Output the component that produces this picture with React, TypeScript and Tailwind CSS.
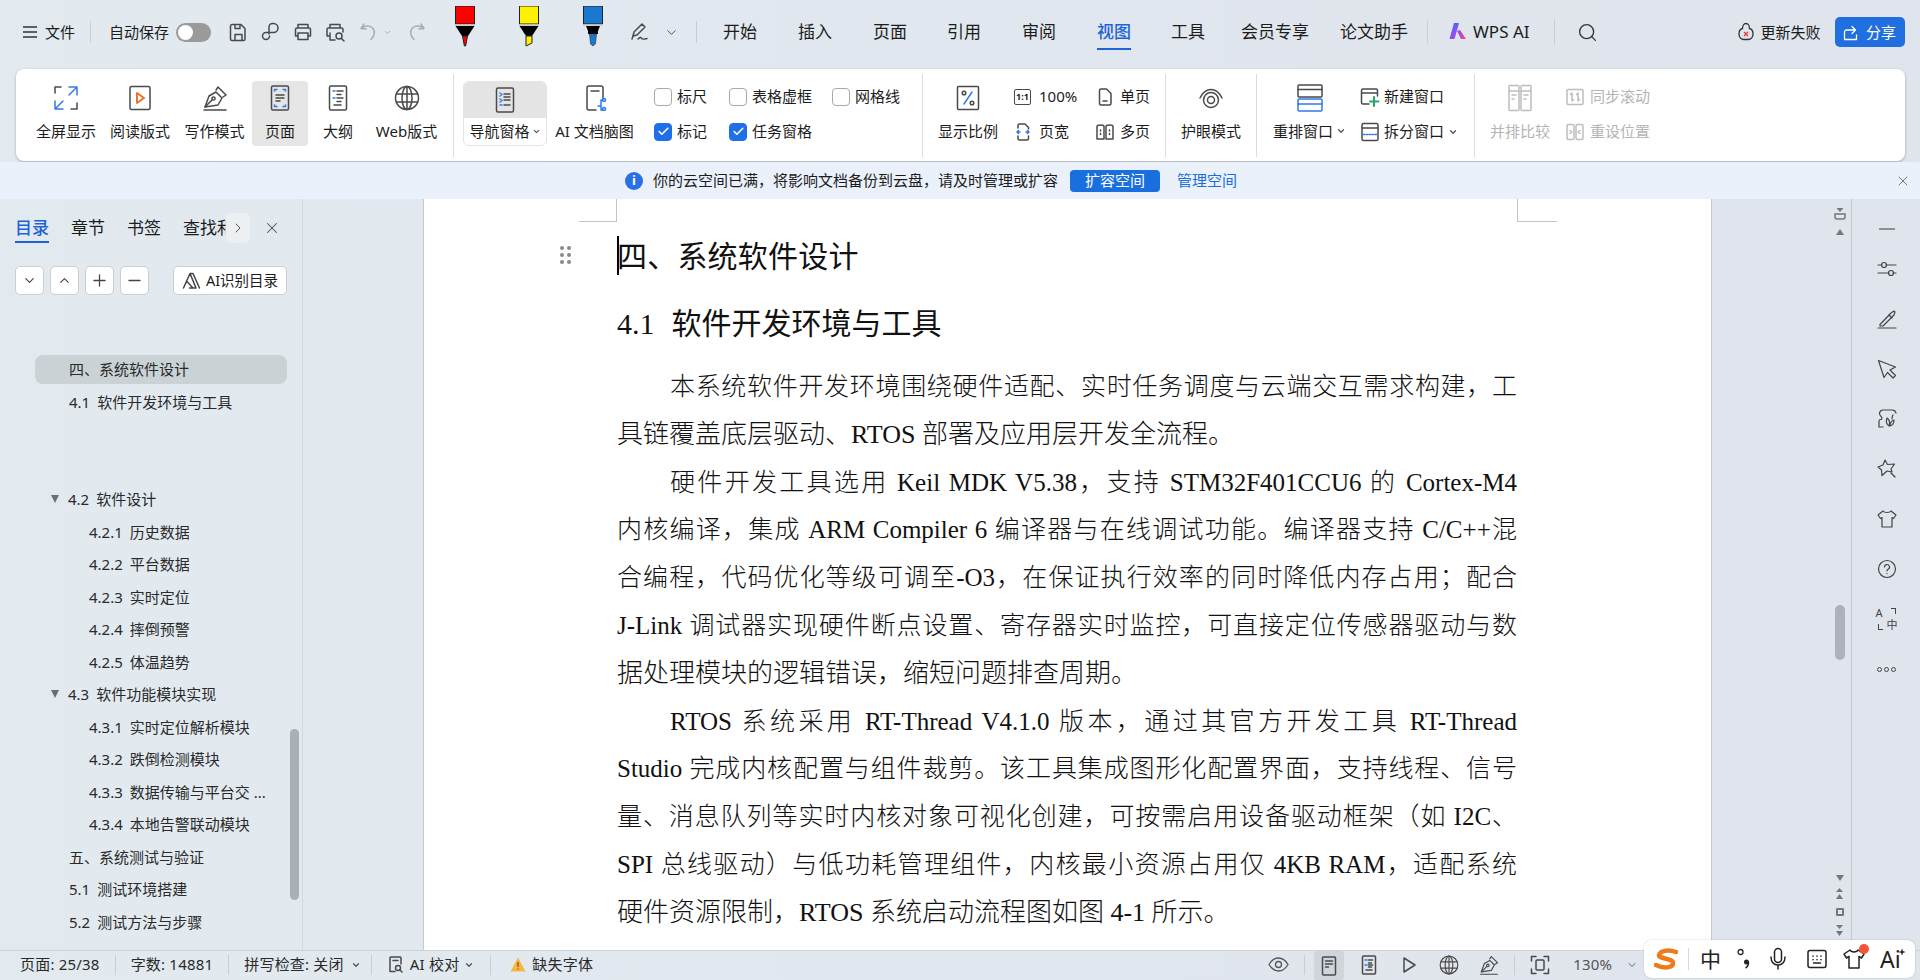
import type { ReactNode } from "react";
import { Check, ChevronDown, ChevronRight, ChevronUp, Minus, Plus, Search, Sparkle, X } from "lucide-react";

const BLUE = "#2f7bea";
const DARK = "#4a4a4a";

// small wrapper so every hand drawn icon shares stroke settings
const Svg = ({ size = 20, box = 24, color = DARK, width = 1.5, children, className = "" }: { size?: number; box?: number; color?: string; width?: number; children: ReactNode; className?: string }) => (
  <svg width={size} height={size} viewBox={`0 0 ${box} ${box}`} fill="none" stroke={color} strokeWidth={width} strokeLinecap="round" strokeLinejoin="round" className={`shrink-0 ${className}`}>
    {children}
  </svg>
);

const Marker = ({ body, kind }: { body: string; kind: "fine" | "chisel" | "round" }) => (
  <svg width="20" height="41" viewBox="0 0 20 41" className="shrink-0">
    <rect x="0.5" y="0" width="19" height="18" fill={body} stroke="#222" strokeWidth="1" />
    <rect x="0" y="18" width="20" height="1.5" fill="#b9b9b9" />
    {kind === "round" ? <path d="M3 20h14l-2 5v3H5v-3z" fill="#000" /> : <path d="M0.5 20h19L13 30H7z" fill="#000" />}
    {kind === "fine" && <path d="M7.5 30h5L10.6 40H9.4z" fill={body} stroke="#222" strokeWidth="1" />}
    {kind === "chisel" && <path d="M7 30h6v7l-6 3z" fill={body} stroke="#222" strokeWidth="1" />}
    {kind === "round" && <path d="M6.5 28h7l-1 10-2.5 2-2.5-2z" fill={body} stroke="#333" strokeWidth="0.6" />}
  </svg>
);

const PenNib = ({ size = 26 }: { size?: number }) => (
  <Svg size={size} box={26}>
    <path d="M3 22l4-11 7-4 6 6-4 7z" />
    <path d="M3 22l7-7" />
    <circle cx="11.5" cy="13.5" r="1.6" />
    <path d="M14 5l2-3 8 8-3 2" />
    <path d="M2 25h22" />
  </Svg>
);

const Globe = ({ size = 26 }: { size?: number }) => (
  <Svg size={size} box={26}>
    <circle cx="13" cy="13" r="11.5" />
    <ellipse cx="13" cy="13" rx="5" ry="11.5" />
    <path d="M2.5 9h21M2.5 17h21M13 1.5v23" />
  </Svg>
);

const DocOutline = ({ size = 26 }: { size?: number }) => (
  <Svg size={size} box={26}>
    <rect x="4.5" y="1" width="17" height="24" rx="1.5" />
    <path d="M8 6h2M8 13h2" stroke={BLUE} />
    <path d="M12 6h6M12 9.5h4M12 13h6M12 16.5h4M9 20h7" />
  </Svg>
);

const DocPage = ({ size = 26 }: { size?: number }) => (
  <Svg size={size} box={26}>
    <rect x="4.5" y="1" width="17" height="24" rx="1.5" />
    <path d="M7.5 6V4.5H10M16 4.5h2.5V6M7.5 20v1.500H10M16 21.500h2.500V20" stroke={BLUE} />
    <path d="M9 10h8M9 13h8M9 16h4" />
  </Svg>
);

// one big button of the ribbon: icon over label
const Big = ({ icon, label, className, muted, caret }: { icon: ReactNode; label: string; className: string; muted?: boolean; caret?: boolean }) => (
  <div className={`flex h-[65px] shrink-0 flex-col items-center ${className}`}>
    <div className="flex h-[34px] items-center justify-center">{icon}</div>
    <div className={`mt-[6px] flex items-center whitespace-nowrap text-[15px] leading-[20px] ${muted ? "text-[#b4b4b4]" : "text-[#1c1c1c]"}`}>
      {label}
      {caret && <ChevronDown size={10} strokeWidth={3} className="ml-[3px] text-[#555]" />}
    </div>
  </div>
);

const Divider = ({ className }: { className: string }) => <div className={`-mt-[7px] h-[83px] w-px shrink-0 bg-[#dcdcdc] ${className}`} />;

const Small = ({ icon, label, caret, muted }: { icon: ReactNode; label: string; caret?: boolean; muted?: boolean }) => (
  <div className={`flex h-[35px] items-center whitespace-nowrap text-[15px] ${muted ? "text-[#b4b4b4]" : "text-[#1c1c1c]"}`}>
    {icon}
    <span>{label}</span>
    {caret && <ChevronDown size={10} strokeWidth={3} className="ml-[4px] text-[#555]" />}
  </div>
);

const Box = ({ on, label }: { on?: boolean; label: string }) => (
  <div className="flex h-[35px] items-center whitespace-nowrap text-[15px] text-[#1c1c1c]">
    <span className={`mr-[5px] flex h-[18px] w-[18px] items-center justify-center rounded-[4px] border ${on ? "border-[#1f6fe8] bg-[#1f6fe8]" : "border-[#a9a9a9] bg-white"}`}>
      {on && <Check size={13} strokeWidth={3} className="text-white" />}
    </span>
    {label}
  </div>
);

const TopBar = () => (
  <div className="flex h-[69px] shrink-0 items-center pb-[5px] pl-[23px] text-[#1c1c1c]">
    <Svg size={14} box={14} color="#333"><path d="M0 2h14M0 7h14M0 12h14" /></Svg>
    <span className="ml-[8px] text-[15px]">文件</span>
    <div className="ml-[15px] h-[22px] w-px bg-[#c9ced3]" />
    <span className="ml-[18px] text-[15px]">自动保存</span>
    <div className="ml-[7px] flex h-[19px] w-[35px] items-center rounded-full bg-[#9a9a9a] pl-[2px]">
      <div className="h-[15px] w-[15px] rounded-full bg-white" />
    </div>
    <div className="ml-[18px]">
      <Svg size={19} box={19}><path d="M3 1.500h9l4 4v10.500a1.500 1.500 0 0 1-1.500 1.500h-11.500a1.500 1.500 0 0 1-1.500-1.500v-13a1.500 1.500 0 0 1 1.500-1.500z" /><path d="M6 17.500v-6h7v6M6 2v3.500h5V2" /></Svg>
    </div>
    <div className="ml-[13px]">
      <Svg size={20} box={20}><path d="M8 12V5a3.500 3.500 0 0 1 3.500-3.500h1a4 4 0 0 1 0 9H5a3.500 3.500 0 1 0 3.500 3.500" /></Svg>
    </div>
    <div className="ml-[12px]">
      <Svg size={20} box={20}><path d="M5 6V2.500h10V6M5 14H2.500V7.500a1.500 1.500 0 0 1 1.500-1.500h12a1.500 1.500 0 0 1 1.500 1.500V14H15" /><rect x="5" y="11" width="10" height="6.500" /></Svg>
    </div>
    <div className="ml-[12px]">
      <Svg size={21} box={21}><path d="M5 6V2.500h10V6M4 14H2V7.500A1.500 1.500 0 0 1 3.500 6h13A1.500 1.500 0 0 1 18 7.500V10M5 11v7h5" /><circle cx="14" cy="14" r="3" /><path d="M16.500 16.500l2.500 2.500" /></Svg>
    </div>
    <div className="ml-[13px]">
      <Svg size={20} box={20} color="#a9aeb3"><path d="M5 2L2 6.500 7 7" /><path d="M2.500 6.500c3-3 7.500-3.500 10.500-1 3.500 3 3 8-1 12" /></Svg>
    </div>
    <ChevronDown size={9} strokeWidth={2.5} className="ml-[4px] text-[#a9aeb3]" />
    <div className="ml-[14px]">
      <Svg size={20} box={20} color="#a9aeb3"><path d="M15 2l3 4.500L13 7" /><path d="M17.500 6.500c-3-3-7.500-3.500-10.500-1-3.500 3-3 8 1 12" /></Svg>
    </div>
    <div className="ml-[29px] -mt-[12px] flex gap-[44px]">
      <Marker body="#fe0000" kind="fine" />
      <Marker body="#fff200" kind="chisel" />
      <Marker body="#1a78cf" kind="round" />
    </div>
    <div className="ml-[27px]">
      <Svg size={20} box={20}><path d="M3 14l1-4 8-8 3 3-8 8z" /><path d="M3 14l-1 3M8 17c2-2 3-2 3.500-.8s2 1.300 5.500.3" /></Svg>
    </div>
    <ChevronDown size={15} strokeWidth={1.6} className="ml-[14px] text-[#555]" />
    <div className="ml-[17px] h-[22px] w-px bg-[#c9ced3]" />
    <div className="ml-[26px] flex items-center text-[17px]">
      <span>开始</span>
      <span className="ml-[41px]">插入</span>
      <span className="ml-[41px]">页面</span>
      <span className="ml-[40px]">引用</span>
      <span className="ml-[41px]">审阅</span>
      <span className="relative ml-[41px] font-medium text-[#1d63d8]">
        视图
        <span className="absolute -bottom-[5px] left-0 h-[2px] w-full bg-[#1d63d8]" />
      </span>
      <span className="ml-[40px]">工具</span>
      <span className="ml-[36px]">会员专享</span>
      <span className="ml-[31px]">论文助手</span>
    </div>
    <div className="ml-[19px] h-[22px] w-px bg-[#c9ced3]" />
    <svg width="20" height="20" viewBox="0 0 20 20" className="ml-[20px] shrink-0">
      <defs>
        <linearGradient id="wpsAi" x1="0" y1="0" x2="1" y2="1">
          <stop offset="0" stopColor="#3a6cf5" />
          <stop offset="0.55" stopColor="#9a4bf0" />
          <stop offset="1" stopColor="#f5487f" />
        </linearGradient>
      </defs>
      <path d="M6 1h5L6.500 17H1.500zM9 9l3-1 6 9h-5z" fill="url(#wpsAi)" />
    </svg>
    <span className="ml-[5px] text-[17px]">WPS AI</span>
    <div className="ml-[24px] h-[26px] w-px bg-[#c9ced3]" />
    <Search size={21} strokeWidth={1.5} className="ml-[22px] text-[#333]" />
    <svg width="16" height="20" viewBox="0 0 16 20" fill="none" stroke="#333" strokeWidth="1.300" className="ml-[140px] shrink-0">
      <path d="M8 1.500c2.500 0 3.500 3 3.500 5 2 .5 3.500 2.500 3.500 5.500a5 5 0 0 1-5 5.500H6a5 5 0 0 1-5-5.500c0-3 1.500-5 3.500-5.500 0-2 1-5 3.500-5z" />
      <path d="M6 10l4 4M10 10l-4 4" stroke="#e03a3a" />
    </svg>
    <span className="ml-[7px] text-[15px]">更新失败</span>
    <div className="ml-[14px] flex h-[30px] w-[70px] items-center justify-center gap-[6px] rounded-[5px] bg-[#1f6fe0] text-[15px] text-white">
      <Svg size={17} box={17} color="#fff" width={1.300}><path d="M1.500 15V8a2 2 0 0 1 2-2H12M9 2.500L12.500 6 9 9.500M1.500 15.500h12V11" /></Svg>
      分享
    </div>
  </div>
);

const Ribbon = () => (
  <div className="mx-[16px] flex h-[92px] w-[1889px] shrink-0 items-start rounded-[8px] bg-white pl-[13px] pt-[12px] shadow-[0_1px_3px_rgba(0,0,0,0.28)]">
    <Big className="w-[74px]" label="全屏显示" icon={
      <Svg size={26} box={26}>
        <path d="M2 8V2h6M24 18v6h-6" />
        <path d="M16 2h8v8M24 2l-8 8M2 16v8h8M2 24l8-8" stroke={BLUE} />
      </Svg>
    } />
    <Big className="w-[74px]" label="阅读版式" icon={
      <Svg size={26} box={26}>
        <rect x="3" y="1.500" width="20" height="23" rx="1.500" />
        <path d="M10 8l7 5-7 5z" stroke="#e8732a" strokeWidth={2} />
      </Svg>
    } />
    <Big className="w-[75px]" label="写作模式" icon={<PenNib />} />
    <Big className="w-[56px] rounded-[4px] bg-[#e6e6e6]" label="页面" icon={<DocPage />} />
    <Big className="w-[60px]" label="大纲" icon={<DocOutline />} />
    <Big className="w-[77px]" label="Web版式" icon={<Globe />} />
    <Divider className="ml-[8px]" />
    <div className="ml-[9px] flex h-[65px] w-[84px] shrink-0 flex-col items-center overflow-hidden rounded-[6px] border border-[#e4e4e4]">
      <div className="flex h-[37px] w-full items-center justify-center bg-[#e4e4e4]">
        <Svg size={26} box={26}>
          <rect x="4.500" y="1" width="17" height="24" rx="1.500" />
          <path d="M8 6l2 1.500L8 9M8 12l2 1.500L8 15M8 18h2" stroke={BLUE} />
          <path d="M12 7h6M12 13h6M12 18h6M12 10h6" />
        </Svg>
      </div>
      <div className="flex h-[27px] items-center whitespace-nowrap text-[15px] text-[#1c1c1c]">
        导航窗格
        <ChevronDown size={9} strokeWidth={3} className="ml-[2px] text-[#555]" />
      </div>
    </div>
    <Big className="w-[95px]" label="AI 文档脑图" icon={
      <Svg size={26} box={26}>
        <path d="M14 25H7a2 2 0 0 1-2-2V3a2 2 0 0 1 2-2h12a2 2 0 0 1 2 2v10" />
        <path d="M9 6h8" />
        <path d="M16 21h3M19 15v10M19 15h2M19 25h2" stroke={BLUE} />
        <circle cx="22" cy="15" r="1.500" stroke={BLUE} />
        <circle cx="22" cy="24" r="1.500" stroke={BLUE} />
      </Svg>
    } />
    <div className="ml-[12px] -mt-[2px] flex w-[75px] shrink-0 flex-col">
      <Box label="标尺" />
      <Box on label="标记" />
    </div>
    <div className="ml-0 -mt-[2px] flex w-[103px] shrink-0 flex-col">
      <Box label="表格虚框" />
      <Box on label="任务窗格" />
    </div>
    <div className="-mt-[2px] flex w-[90px] shrink-0 flex-col">
      <Box label="网格线" />
    </div>
    <Divider className="" />
    <Big className="ml-[15px] w-[60px]" label="显示比例" icon={
      <Svg size={26} box={26}>
        <rect x="2.500" y="1.500" width="21" height="23" rx="1" />
        <path d="M17 7L9 19" stroke={BLUE} />
        <circle cx="9" cy="8" r="1.800" />
        <circle cx="17" cy="18" r="1.800" />
      </Svg>
    } />
    <div className="ml-[16px] -mt-[2px] flex w-[82px] shrink-0 flex-col">
      <Small label="100%" icon={
        <span className="mr-[8px] flex h-[16px] w-[17px] items-center justify-center rounded-[2px] border border-[#4a4a4a] text-[9px] font-bold leading-none">1:1</span>
      } />
      <Small label="页宽" icon={
        <Svg size={18} box={18} className="mr-[7px]">
          <path d="M4 5V2.500A1.500 1.500 0 0 1 5.500 1H11l3.500 3.500V6M4 13v2.500A1.500 1.500 0 0 0 5.500 17h7.500a1.500 1.500 0 0 0 1.500-1.500V13" />
          <path d="M3 9h3M3 9l1.500-1.500M3 9l1.500 1.500M15 9h-3M15 9l-1.500-1.500M15 9l-1.500 1.500" stroke={BLUE} />
        </Svg>
      } />
    </div>
    <div className="-mt-[2px] flex w-[69px] shrink-0 flex-col">
      <Small label="单页" icon={
        <Svg size={18} box={18} className="mr-[6px]">
          <path d="M3.500 2.500A1.500 1.500 0 0 1 5 1h5.500L15 5.500v10a1.500 1.500 0 0 1-1.500 1.500H5a1.500 1.500 0 0 1-1.500-1.500z" />
          <path d="M7 13h4" />
        </Svg>
      } />
      <Small label="多页" icon={
        <Svg size={18} box={18} className="mr-[6px]">
          <path d="M1 3.500C1 1.500 8 1.500 8 3.500v12.500H1zM10 3.500c0-2 7-2 7 0v12.500h-7z" />
          <path d="M4.500 7v1M4.500 10.500v1M13.500 7v1M13.500 10.500v1" />
        </Svg>
      } />
    </div>
    <Divider className="" />
    <Big className="ml-[15px] w-[60px]" label="护眼模式" icon={
      <Svg size={28} box={28}>
        <circle cx="14" cy="16" r="3.500" />
        <circle cx="14" cy="16" r="7.500" />
        <path d="M3 14C6 8 10 5.500 14 5.500S22 8 25 14" />
      </Svg>
    } />
    <Divider className="ml-[15px]" />
    <Big className="ml-[15px] w-[75px]" caret label="重排窗口" icon={
      <Svg size={28} box={28}>
        <rect x="2" y="1" width="24" height="12" rx="1" />
        <path d="M2 5.500h24" />
        <rect x="2" y="15" width="24" height="12" rx="1" stroke={BLUE} />
        <path d="M2 20h24" stroke={BLUE} />
      </Svg>
    } />
    <div className="ml-[13px] -mt-[2px] flex w-[114px] shrink-0 flex-col">
      <Small label="新建窗口" icon={
        <Svg size={20} box={20} className="mr-[4px]">
          <path d="M9 17H3a1.500 1.500 0 0 1-1.500-1.500v-12A1.500 1.500 0 0 1 3 2h13a1.500 1.500 0 0 1 1.500 1.500V9M1.500 6h16" />
          <path d="M14 10v9M10 14.500h8.500" stroke="#27a468" strokeWidth={2} />
        </Svg>
      } />
      <Small label="拆分窗口" caret icon={
        <Svg size={20} box={20} className="mr-[4px]">
          <rect x="2" y="1.500" width="16" height="17" rx="1.500" />
          <path d="M2 6h16" />
          <path d="M3 12.500h14" stroke={BLUE} strokeDasharray="1.500 1.500" />
        </Svg>
      } />
    </div>
    <Divider className="" />
    <Big className="ml-[15px] w-[60px]" muted label="并排比较" icon={
      <Svg size={28} box={28} color="#bdbdbd">
        <rect x="3" y="1.500" width="10" height="25" rx="1" />
        <rect x="15" y="1.500" width="10" height="25" rx="1" />
        <path d="M3 7h10M15 7h10M6 11h4M18 11h4M6 15h2M18 15h2" />
      </Svg>
    } />
    <div className="ml-[16px] -mt-[2px] flex w-[110px] shrink-0 flex-col">
      <Small muted label="同步滚动" icon={
        <Svg size={18} box={18} color="#bdbdbd" className="mr-[6px]">
          <rect x="1" y="1.500" width="16" height="15" rx="1" />
          <path d="M6 5v8M6 5L4.500 6.500M6 13l1.500-1.500M12 5v8M12 5l-1.500 1.500M12 13l1.500-1.500" />
        </Svg>
      } />
      <Small muted label="重设位置" icon={
        <Svg size={18} box={18} color="#bdbdbd" className="mr-[6px]">
          <rect x="1" y="1.500" width="7" height="15" rx="1.500" />
          <rect x="10" y="1.500" width="7" height="15" rx="1.500" />
          <path d="M6 9L4 7.500M6 9L4 10.500M12 9l2-1.500M12 9l2 1.500" />
        </Svg>
      } />
    </div>
  </div>
);

const InfoBar = () => (
  <div className="mt-px flex h-[37px] shrink-0 items-center bg-[#ebf1fb] pl-[625px] text-[15px] text-[#1c1c1c]">
    <span className="flex h-[18px] w-[18px] items-center justify-center rounded-full bg-[#2a6fe8] text-[13px] font-bold leading-none text-white">i</span>
    <span className="ml-[10px] whitespace-nowrap">你的云空间已满，将影响文档备份到云盘，请及时管理或扩容</span>
    <span className="ml-[12px] flex h-[22px] w-[90px] items-center justify-center rounded-[4px] bg-[#1a6fdf] text-white">扩容空间</span>
    <span className="ml-[17px] whitespace-nowrap text-[#1a6fdf]">管理空间</span>
    <X size={16} strokeWidth={1.3} className="ml-auto mr-[9px] text-[#666]" />
  </div>
);

const ToolBtn = ({ children, className = "w-[29px]" }: { children: ReactNode; className?: string }) => (
  <div className={`flex h-[29px] items-center justify-center rounded-[5px] border border-[#c9ced3] bg-white text-[#444] ${className}`}>{children}</div>
);

type TocRow = { num?: string; text?: string; level?: 1 | 2 | 3; open?: boolean; active?: boolean; more?: boolean };

const toc: TocRow[] = [
  { text: "四、系统软件设计", level: 1, active: true },
  { num: "4.1", text: "软件开发环境与工具", level: 1 },
  {},
  {},
  { num: "4.2", text: "软件设计", level: 1, open: true },
  { num: "4.2.1", text: "历史数据", level: 2 },
  { num: "4.2.2", text: "平台数据", level: 2 },
  { num: "4.2.3", text: "实时定位", level: 2 },
  { num: "4.2.4", text: "摔倒预警", level: 2 },
  { num: "4.2.5", text: "体温趋势", level: 2 },
  { num: "4.3", text: "软件功能模块实现", level: 1, open: true },
  { num: "4.3.1", text: "实时定位解析模块", level: 2 },
  { num: "4.3.2", text: "跌倒检测模块", level: 2 },
  { num: "4.3.3", text: "数据传输与平台交 ...", level: 2 },
  { num: "4.3.4", text: "本地告警联动模块", level: 2 },
  { text: "五、系统测试与验证", level: 1 },
  { num: "5.1", text: "测试环境搭建", level: 1 },
  { num: "5.2", text: "测试方法与步骤", level: 1 },
];

const Toc = () => (
  <div className="relative mt-[58px] w-[302px]">
    {toc.map((row, i) => (
      <div key={i} className="flex h-[32.5px] items-center pl-[35px] text-[15px] text-[#2a2a2a]">
        {row.text && (
          <div className={`flex h-[29px] w-[252px] items-center whitespace-nowrap rounded-[8px] ${row.active ? "bg-[#cbd2d6]" : ""} ${row.level === 2 ? "pl-[54px]" : "pl-[34px]"}`}>
            {row.open && <span className="-ml-[18px] mr-[9px] h-0 w-0 border-x-[4.5px] border-t-[8px] border-x-transparent border-t-[#6e6e6e]" />}
            {row.num && <span className="mr-[7px]">{row.num}</span>}
            {row.text}
          </div>
        )}
      </div>
    ))}
  </div>
);

const LeftPanel = () => (
  <div className="relative flex w-[303px] shrink-0 flex-col border-r border-[#d3dadf]">
    <div className="flex h-[45px] items-center pl-[15px] pt-[13px] text-[17px] text-[#1c1c1c]">
      <span className="relative font-medium text-[#1d63d8]">
        目录
        <span className="absolute -bottom-[2px] left-0 h-[2px] w-full bg-[#1d63d8]" />
      </span>
      <span className="ml-[22px]">章节</span>
      <span className="ml-[22px]">书签</span>
      <span className="ml-[22px] w-[43px] whitespace-nowrap">查找和</span>
      <span className="relative flex h-[30px] w-[24px] items-center justify-center rounded-[5px] bg-[#edf0f3]">
        <ChevronRight size={16} strokeWidth={1.5} className="text-[#555]" />
      </span>
      <X size={18} strokeWidth={1.4} className="ml-[13px] text-[#555]" />
    </div>
    <div className="mt-[22px] flex items-center pl-[15px]">
      <div className="flex gap-[6px]">
        <ToolBtn><ChevronDown size={15} strokeWidth={1.8} /></ToolBtn>
        <ToolBtn><ChevronUp size={15} strokeWidth={1.8} /></ToolBtn>
        <ToolBtn><Plus size={19} strokeWidth={1.6} /></ToolBtn>
        <ToolBtn><Minus size={19} strokeWidth={1.6} /></ToolBtn>
      </div>
      <ToolBtn className="ml-[24px] w-[114px] gap-[5px] text-[14.500px]">
        <Svg size={19} box={19} color="#444"><path d="M1.500 17L8 2.500h3L17.500 17M4.500 10L11 17M8 2.500L14 17H7.500" /></Svg>
        <span className="whitespace-nowrap text-[#1c1c1c]">AI识别目录</span>
      </ToolBtn>
    </div>
    <Toc />
    <div className="absolute left-[290px] top-[530px] h-[171px] w-[9px] rounded-full bg-[#a9b1b4]" />
  </div>
);

// one typeset line of the page, stretched to the text block unless it ends a paragraph
const Line = ({ children, first, end }: { children: ReactNode; first?: boolean; end?: boolean }) => (
  <div className={`h-[47.800px] leading-[47.800px] ${first ? "pl-[53px]" : ""} ${end ? "text-[26px]" : "text-[25px] [text-align:justify] [text-align-last:justify]"}`}>
    {children}
  </div>
);

const Page = () => (
  <div className="relative w-[1289px] shrink-0 border-x border-[#c5cacf] bg-white pl-[193px] pr-[194px] [font-family:'Liberation_Serif','Noto_Sans_CJK_SC',serif] text-[#111]">
    <div className="-ml-[38px] -mr-[40px] flex h-[23px] justify-between">
      <div className="h-full w-[38px] border-b border-r border-[#c4c4c4]" />
      <div className="h-full w-[40px] border-b border-l border-[#c4c4c4]" />
    </div>
    <div className="flex h-[68px] items-center text-[30px] tracking-[0.2px]">四、系统软件设计</div>
    <div className="flex h-[66px] items-center text-[30px]">
      <span className="mr-[17px]">4.1</span>软件开发环境与工具
    </div>
    <div className="mt-[7px] font-light">
      <Line first>本系统软件开发环境围绕硬件适配、实时任务调度与云端交互需求构建，工</Line>
      <Line end>具链覆盖底层驱动、RTOS 部署及应用层开发全流程。</Line>
      <Line first>硬件开发工具选用 Keil MDK V5.38，支持 STM32F401CCU6 的 Cortex-M4</Line>
      <Line>内核编译，集成 ARM Compiler 6 编译器与在线调试功能。编译器支持 C/C++混</Line>
      <Line>合编程，代码优化等级可调至-O3，在保证执行效率的同时降低内存占用；配合</Line>
      <Line>J-Link 调试器实现硬件断点设置、寄存器实时监控，可直接定位传感器驱动与数</Line>
      <Line end>据处理模块的逻辑错误，缩短问题排查周期。</Line>
      <Line first>RTOS 系统采用 RT-Thread V4.1.0 版本，通过其官方开发工具 RT-Thread</Line>
      <Line>Studio 完成内核配置与组件裁剪。该工具集成图形化配置界面，支持线程、信号</Line>
      <Line>量、消息队列等实时内核对象可视化创建，可按需启用设备驱动框架（如 I2C、</Line>
      <Line>SPI 总线驱动）与低功耗管理组件，内核最小资源占用仅 4KB RAM，适配系统</Line>
      <Line end>硬件资源限制，RTOS 系统启动流程图如图 4-1 所示。</Line>
    </div>
    <div className="absolute left-[193px] top-[37px] h-[39px] w-[2px] bg-black" />
    <div className="absolute left-[136px] top-[47px] grid grid-cols-2 gap-x-[3px] gap-y-[3px]">
      {[0, 1, 2, 3, 4, 5].map((d) => (
        <span key={d} className="h-[4px] w-[4px] rounded-full bg-[#8a8a8a]" />
      ))}
    </div>
  </div>
);

const RightGutter = () => (
  <div className="flex w-[139px] shrink-0 flex-col items-end pr-[5px] text-[#777]">
    <svg width="12" height="12" viewBox="0 0 12 12" className="mt-[9px] shrink-0" fill="#777">
      <path d="M2.500 0h7L6 4z" />
      <path d="M1 6h10v3a2 2 0 0 1-2 2H3a2 2 0 0 1-2-2z" fill="none" stroke="#777" strokeWidth="1.500" />
    </svg>
    <span className="mr-[2px] mt-[9px] h-0 w-0 border-x-[4px] border-b-[6px] border-x-transparent border-b-[#777]" />
    <div className="mr-px mt-[370px] h-[55px] w-[10px] rounded-full bg-[#adb1bb]" />
    <span className="mr-[2px] mt-[215px] h-0 w-0 border-x-[4px] border-t-[6px] border-x-transparent border-t-[#777]" />
    <svg width="9" height="12" viewBox="0 0 9 12" className="mr-[2px] mt-[7px]" fill="#777"><path d="M4.500 0L8 4H1zM4.500 6L8 11H1z" /></svg>
    <span className="mr-[2px] mt-[8px] h-[8px] w-[8px] rounded-[1px] border-2 border-[#777]" />
    <svg width="9" height="12" viewBox="0 0 9 12" className="mr-[2px] mt-[8px]" fill="#777"><path d="M1 1h7L4.500 5zM1 7h7L4.500 12z" /></svg>
  </div>
);

const SideIcon = ({ children }: { children: ReactNode }) => <div className="flex h-[50px] items-center justify-center">{children}</div>;

const RightSide = () => (
  <div className="flex w-[70px] shrink-0 flex-col items-center border-l border-[#c5cacf] pt-[15px]">
    <div className="flex h-[30px] items-center">
      <span className="h-[2px] w-[16px] bg-[#8f8f8f]" />
    </div>
    <SideIcon>
      <Svg size={20} box={20} width={1.200} color="#444"><path d="M1 6h4M9 6h10M1 14h11M16 14h3" /><circle cx="7" cy="6" r="2.500" /><circle cx="14" cy="14" r="2.500" /></Svg>
    </SideIcon>
    <SideIcon>
      <Svg size={20} box={20} width={1.200} color="#444"><path d="M1 19h18" /><path d="M3 15.500L14 4l3-2 1 1-1 3-11 11H3z" /><path d="M12 6l3 3" /></Svg>
    </SideIcon>
    <SideIcon>
      <Svg size={20} box={20} width={1.200} color="#444"><path d="M1.500 1.500L18.500 8l-5.500 3 5.500 5.500-2.500 2.500-5.500-5.500L7 18.500z" /></Svg>
    </SideIcon>
    <SideIcon>
      <Svg size={20} box={20} width={1.200} color="#444"><path d="M6 18H2v-6c0-1 1-1.500 2-1.500S5 9 4.500 8 2 6 2.500 4 4 1 6 1h9a4 4 0 0 1 4 3" /><path d="M12 17c-3-2-3-5-2-8 3 2 3 5 2 8zM13 17c0-3 1-5 4-6 0 3-1 5-4 6zM16 6c-1 1-1 2-1 4" /></Svg>
    </SideIcon>
    <SideIcon>
      <Svg size={20} box={20} width={1.200} color="#444"><path d="M8 1l2.500 4.500 7-.5-3.500 5 1 3-5-1-5 4.500-.5-5.500L1 8l5-2z" /><path d="M14 14l4 4" /></Svg>
    </SideIcon>
    <SideIcon>
      <Svg size={20} box={20} width={1.200} color="#444"><path d="M6 2L1 6l2.500 3.500L5 8.500V18h10V8.500l1.500 1L19 6l-5-4c-1 2-7 2-8 0z" /></Svg>
    </SideIcon>
    <SideIcon>
      <Svg size={20} box={20} width={1.200} color="#444"><circle cx="10" cy="10" r="8.500" /><path d="M7.500 8a2.500 2.500 0 1 1 3.500 2.300c-.7.300-1 .8-1 1.700M10 14.500v.2" /></Svg>
    </SideIcon>
    <SideIcon>
      <div className="relative h-[22px] w-[20px] text-[#444]">
        <span className="absolute -left-[1px] -top-[1px] text-[11px] leading-[12px]">A</span>
        <span className="absolute -bottom-[1px] -right-[1px] text-[11px] leading-[12px]">中</span>
        <span className="absolute right-[1px] top-0 h-[6px] w-[5px] border-r border-t border-[#444]" />
        <span className="absolute bottom-0 left-[1px] h-[6px] w-[5px] border-b border-l border-[#444]" />
      </div>
    </SideIcon>
    <SideIcon>
      <div className="flex gap-[2px]">
        <span className="h-[5px] w-[5px] rounded-full border border-[#444]" />
        <span className="h-[5px] w-[5px] rounded-full border border-[#444]" />
        <span className="h-[5px] w-[5px] rounded-full border border-[#444]" />
      </div>
    </SideIcon>
  </div>
);

const VBar = ({ className }: { className: string }) => <div className={`h-[20px] w-px shrink-0 bg-[#c9ced3] ${className}`} />;

const StatusBar = () => (
  <div className="flex h-[30px] shrink-0 items-center border-t border-[#cdd2d6] pb-[2px] pl-[20px] text-[15px] tracking-[0.2px] text-[#2a2a2a]">
    <span className="whitespace-nowrap">页面: 25/38</span>
    <VBar className="ml-[15px]" />
    <span className="ml-[15px] whitespace-nowrap">字数: 14881</span>
    <VBar className="ml-[15px]" />
    <span className="ml-[15px] whitespace-nowrap">拼写检查: 关闭</span>
    <ChevronDown size={10} strokeWidth={3} className="ml-[7px] text-[#555]" />
    <VBar className="ml-[10px]" />
    <Svg size={17} box={17} className="ml-[15px]"><path d="M8 15.500H3V2a1 1 0 0 1 1-1h9a1 1 0 0 1 1 1v6M6 4.500h5" /><circle cx="11" cy="12" r="2.500" /><path d="M13 14l2 2" /></Svg>
    <span className="ml-[6px] whitespace-nowrap">AI 校对</span>
    <ChevronDown size={10} strokeWidth={3} className="ml-[5px] text-[#555]" />
    <VBar className="ml-[16px]" />
    <svg width="16" height="15" viewBox="0 0 16 15" className="ml-[19px] shrink-0"><path d="M8 0.500L15.500 14.500H0.500z" fill="#f5b642" /><path d="M8 5v5M8 11.500v1.200" stroke="#b5561d" strokeWidth="1.500" /></svg>
    <span className="ml-[6px] whitespace-nowrap">缺失字体</span>
    <svg width="21" height="15" viewBox="0 0 21 15" fill="none" stroke="#555" strokeWidth="1.300" className="ml-[675px] shrink-0"><path d="M1 7.500C4 2.500 7 1 10.500 1S17 2.500 20 7.500C17 12.500 14 14 10.500 14S4 12.500 1 7.500z" /><circle cx="10.500" cy="7.500" r="3" /></svg>
    <VBar className="ml-[15px]" />
    <div className="ml-[9px] -mb-[2px] flex h-[29px] w-[30px] items-center justify-center rounded-[3px] bg-[#d0d5dc]">
      <Svg size={20} box={20}><rect x="3.500" y="1" width="13" height="18" rx="1" /><path d="M6.500 5h7M6.500 8h7M6.500 11h3" /></Svg>
    </div>
    <Svg size={20} box={20} className="ml-[15px]"><rect x="3.500" y="1" width="13" height="18" rx="1" /><path d="M6 5h2M6 10h2" stroke={BLUE} /><path d="M9.500 5h4M9.500 8h3M9.500 10h4M9.500 12h3M7 15h6" /></Svg>
    <Svg size={18} box={18} className="ml-[21px]"><path d="M4 2l11 7-11 7z" /></Svg>
    <div className="ml-[21px]"><Globe size={20} /></div>
    <div className="ml-[20px]"><PenNib size={20} /></div>
    <VBar className="ml-[15px]" />
    <Svg size={20} box={20} className="ml-[15px]"><path d="M1.500 6V1.500H6M14 1.500h4.500V6M18.500 14v4.500H14M6 18.500H1.500V14" /><rect x="6" y="5" width="8" height="10" rx="1" /></Svg>
    <span className="ml-[23px] text-[#555]">130%</span>
    <ChevronDown size={12} strokeWidth={2} className="ml-[14px] text-[#666]" />
  </div>
);

const ImeBar = () => (
  <div className="absolute bottom-[2px] right-[5px] flex h-[38px] w-[271px] items-center rounded-[8px] bg-white pl-[10px] text-[#222] shadow-[0_0_2px_rgba(0,0,0,0.2)]">
    <svg width="24" height="24" viewBox="0 0 24 24" fill="none" stroke="#ef7a1a" strokeWidth="4.500" strokeLinecap="round" className="shrink-0"><path d="M22 5C14 2 6 4 5 8s14 3 14 8-9 6-17 2" /></svg>
    <div className="ml-[10px] h-[22px] w-px bg-[#d8d8d8]" />
    <span className="ml-[11px] text-[21px] leading-none">中</span>
    <svg width="14" height="22" viewBox="0 0 14 22" className="ml-[16px] shrink-0"><circle cx="3.500" cy="4" r="2.500" fill="none" stroke="#222" strokeWidth="1.300" /><circle cx="9.500" cy="14" r="2.500" fill="#222" /><path d="M11.500 14c0 3-1 5-3 6" fill="none" stroke="#222" strokeWidth="1.500" /></svg>
    <Svg size={24} box={24} color="#222" className="ml-[15px]"><rect x="8.500" y="1.500" width="7" height="14" rx="3.500" /><path d="M5 10c0 5 3 8 7 8s7-3 7-8M12 18v4" /></Svg>
    <Svg size={22} box={22} color="#222" className="ml-[16px]"><rect x="2" y="2.500" width="18" height="17" rx="2" /><path d="M7 8v.2M11 8v.2M15 8v.2M7 11.500v.2M11 11.500v.2M15 11.500v.2M7.500 15h7" /></Svg>
    <div className="relative ml-[14px]">
      <Svg size={24} box={24} color="#222"><path d="M8 3L2 7l2.500 4L7 9.500V21h10V9.500L19.500 11 22 7l-6-4c-1 2.500-7 2.500-8 0z" /></Svg>
      <span className="absolute -top-[3px] right-[-3px] h-[10px] w-[10px] rounded-full bg-[#f4553a]" />
    </div>
    <span className="relative ml-[14px] text-[23px] leading-none">
      Ai
      <Sparkle size={8} fill="#222" strokeWidth={0} className="absolute -right-[5px] top-0" />
    </span>
  </div>
);

const App = () => (
  <div className="relative flex h-[980px] w-[1920px] flex-col overflow-hidden bg-gradient-to-r from-[#e2eaf0] to-[#e0e4ec] [font-family:'Noto_Sans','Noto_Sans_CJK_SC',sans-serif]">
    <TopBar />
    <Ribbon />
    <InfoBar />
    <div className="flex min-h-0 flex-1">
      <LeftPanel />
      <div className="w-[120px] shrink-0" />
      <Page />
      <RightGutter />
      <RightSide />
    </div>
    <StatusBar />
    <ImeBar />
  </div>
);

export default App;
